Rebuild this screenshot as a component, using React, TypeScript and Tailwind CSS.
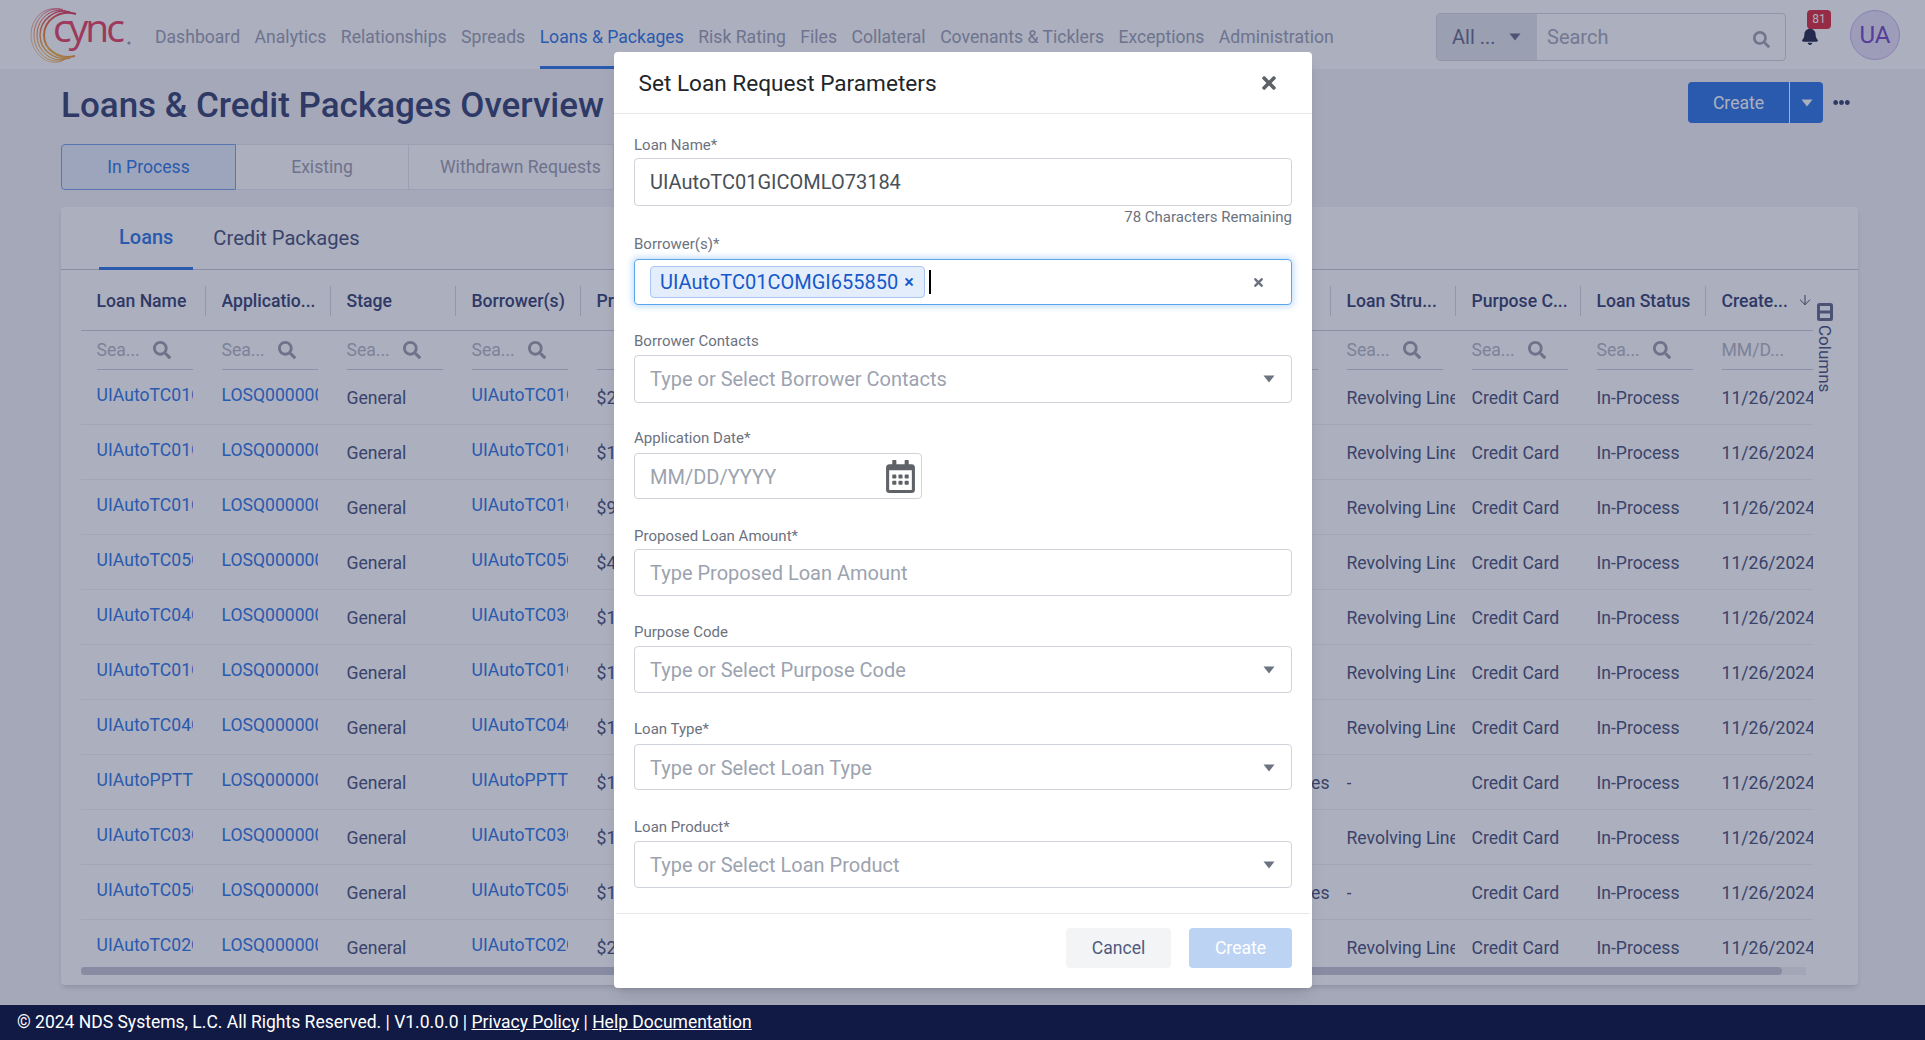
/**
 * Loans & Credit Packages overview with the "Set Loan Request Parameters" modal open
 */

import { ArrowDown } from 'lucide-react';
import { FaBell, FaEllipsisH, FaRegCalendarAlt, FaSearch, FaTimes } from 'react-icons/fa';

// ===========================================
// DATA
// ===========================================

const NAV_ITEMS = [
  'Dashboard',
  'Analytics',
  'Relationships',
  'Spreads',
  'Loans & Packages',
  'Risk Rating',
  'Files',
  'Collateral',
  'Covenants & Ticklers',
  'Exceptions',
  'Administration',
];

const COLUMNS = [
  'Loan Name',
  'Applicatio...',
  'Stage',
  'Borrower(s)',
  'Proposed...',
  'Loan Am...',
  'Loan Type',
  'Loan Pro...',
  'Loan Off...',
  'Loan Class',
  'Loan Stru...',
  'Purpose C...',
  'Loan Status',
  'Create...',
];

const LOAN_PREFIXES = ['TC01', 'TC01', 'TC01', 'TC05', 'TC04', 'TC01', 'TC04', 'PPTT', 'TC03', 'TC05', 'TC02'];
const BORROWER_PREFIXES = ['TC01', 'TC01', 'TC01', 'TC05', 'TC03', 'TC01', 'TC04', 'PPTT', 'TC03', 'TC05', 'TC02'];
const AMOUNTS = ['$2', '$1', '$9', '$4', '$1', '$1', '$1', '$1', '$1', '$1', '$2'];

// ===========================================
// SMALL PARTS
// ===========================================

function Caret({ className }: { className: string }) {
  return (
    <svg viewBox="0 0 12 8" className={className} fill="currentColor">
      <path d="M0.5 0.5h11L6 7.5z" />
    </svg>
  );
}

function Logo() {
  return (
    <div className="relative w-[104px] h-[60px] shrink-0">
      <svg viewBox="0 0 104 60" className="w-full h-full">
        <defs>
          <linearGradient id="swirl" x1="0.7" y1="0.05" x2="0.3" y2="1">
            <stop offset="0" stopColor="#e0465f" />
            <stop offset="0.55" stopColor="#ef7d3f" />
            <stop offset="1" stopColor="#f3c04a" />
          </linearGradient>
        </defs>
        <g fill="none" stroke="url(#swirl)">
          <path d="M31 4.5C15 0 1 13 1 30s15 32 31 26" strokeWidth="0.6" />
          <path d="M33 4.5C18 1 4 13 4 30s14 30 30 25" strokeWidth="0.8" />
          <path d="M36 6C21 2 7 14 7 30s14 28 29 24" strokeWidth="1" />
          <path d="M40 7C25 3 10 15 10 30s14 26 30 23" strokeWidth="1.4" />
          <path d="M46 9C30 4 14 15 14 30s15 25 31 21" strokeWidth="2" />
        </g>
        <text
          x="23"
          y="37"
          fill="#e94a66"
          fontFamily="'Open Sans', sans-serif"
          fontSize="39"
          letterSpacing="-3"
        >
          cync
        </text>
        <circle cx="99" cy="38" r="1.6" fill="#9aa0b2" />
      </svg>
    </div>
  );
}

// ===========================================
// HEADER
// ===========================================

function TopBar() {
  return (
    <header className="h-[69px] shrink-0 bg-white shadow-md flex items-center pl-[30px] pr-[25px]">
      <Logo />
      <nav className="flex items-stretch h-full ml-[21px] gap-[14.5px]">
        {NAV_ITEMS.map((item) => {
          const active = item === 'Loans & Packages';
          return (
            <span
              key={item}
              className={
                active
                  ? 'flex items-center pt-[8px] border-b-[3px] border-[#377de6] text-[#377de6] text-[17.6px] whitespace-nowrap'
                  : 'flex items-center pt-[8px] border-b-[3px] border-transparent text-[#a0a5b6] text-[17.6px] whitespace-nowrap'
              }
            >
              {item}
            </span>
          );
        })}
      </nav>
      <div className="ml-auto flex items-center">
        <div className="mt-[4px] flex w-[350px] h-[48px] rounded border border-[#d5d7e0] overflow-hidden">
          <div className="w-[100px] bg-[#e4e6ec] flex items-center pl-[15px] text-[#6d7390] text-[20px]">
            <span>All ...</span>
            <Caret className="w-[12px] h-[8px] ml-[13px] text-[#6d7390]" />
          </div>
          <div className="flex-1 flex items-center pl-[10px] pr-[15px] text-[20px] text-[#a9adbd]">
            <span>Search</span>
            <FaSearch className="ml-auto mt-[6px] w-[17px] h-[17px] text-[#a4a8b5]" />
          </div>
        </div>
        <div className="relative ml-[14px] w-[20px] h-[30px] flex items-center justify-center">
          <FaBell className="w-[16px] h-[18px] mt-[2px] text-[#2d3454]" />
          <span className="absolute -top-[10px] left-[7px] w-[24px] h-[19px] rounded-sm bg-[#dc3545] text-white text-[12px] flex items-center justify-center">
            81
          </span>
        </div>
        <div className="ml-[30px] w-[50px] h-[50px] rounded-full bg-[#e9e3f8] border border-[#cbb8ef] text-[#7a52c7] text-[24px] flex items-center justify-center">
          UA
        </div>
      </div>
    </header>
  );
}

// ===========================================
// TABLE
// ===========================================

function HeaderRow() {
  return (
    <div className="flex h-[61px] shrink-0 border-b border-[#cdd0da]">
      {COLUMNS.map((col, i) => {
        const last = i === COLUMNS.length - 1;
        return (
          <div key={col} className={last ? 'w-[107px] shrink-0 flex items-center pl-[15.5px] pt-[3px]' : 'w-[125px] shrink-0 flex items-center pl-[15.5px] pt-[3px]'}>
            <span className="flex-1 text-[17.6px] font-medium text-[#3e4b78] whitespace-nowrap overflow-hidden">{col}</span>
            {last ? (
              <ArrowDown className="w-[16px] h-[16px] mb-[4px] text-[#4b5563]" strokeWidth={1.5} />
            ) : (
              <span className="w-px h-[30px] -mt-[2px] bg-[#d9dbe3]" />
            )}
          </div>
        );
      })}
    </div>
  );
}

function FilterRow() {
  return (
    <div className="flex h-[39px] shrink-0">
      {COLUMNS.map((col, i) => {
        const last = i === COLUMNS.length - 1;
        // the amount column's filter has no text box of its own
        const blank = i === 4;
        return (
          <div key={col} className="w-[125px] shrink-0 pl-[15.5px]">
            <div className="flex items-center h-full border-b border-[#cdd0da] w-[96px] text-[17.6px] text-[#b7bac6]">
              {!blank && <span>{last ? 'MM/D...' : 'Sea...'}</span>}
              {!last && !blank && <FaSearch className="ml-[13px] w-[18px] h-[18px] text-[#a0a3ae]" />}
            </div>
          </div>
        );
      })}
    </div>
  );
}

function LinkCell({ text }: { text: string }) {
  return (
    <div className="w-[125px] shrink-0 pl-[15.5px] pt-[12px]">
      <div className="w-[96px] overflow-hidden whitespace-nowrap text-[17.6px] leading-[27px] text-[#377de6]">{text}</div>
    </div>
  );
}

function TextCell({ text }: { text: string }) {
  return (
    <div className="w-[125px] shrink-0 pl-[15.5px] pt-[15px]">
      <div className="w-[108px] overflow-hidden whitespace-nowrap text-[17.6px] leading-[27px] text-[#505a80]">{text}</div>
    </div>
  );
}

function LoanRow({ index }: { index: number }) {
  const loan = LOAN_PREFIXES[index];
  const borrower = BORROWER_PREFIXES[index];
  const noStructure = index === 7 || index === 9;
  const loanName = loan === 'PPTT' ? 'UIAutoPPTT' : `UIAuto${loan}COMGI655850`;
  const borrowerName = borrower === 'PPTT' ? 'UIAutoPPTT' : `UIAuto${borrower}COMGI655850`;

  return (
    <div className="flex h-[55px] shrink-0 border-b border-[#f0f1f5]">
      <LinkCell text={loanName} />
      <LinkCell text="LOSQ000000123" />
      <TextCell text="General" />
      <LinkCell text={borrowerName} />
      <TextCell text={`${AMOUNTS[index]},000,000`} />
      <TextCell text="$0.00" />
      <TextCell text="Commercial" />
      <TextCell text="Credit Line" />
      <TextCell text="Admin" />
      <div className="w-[125px] shrink-0 pl-[15.5px] pt-[15px]">
        <div className={noStructure ? 'w-[108px] text-right whitespace-nowrap text-[17.6px] leading-[27px] text-[#505a80]' : 'w-[108px] whitespace-nowrap text-[17.6px] leading-[27px] text-[#505a80]'}>
          {noStructure ? 'Auto Leases' : 'Lines'}
        </div>
      </div>
      <TextCell text={noStructure ? '-' : 'Revolving Line of Credit'} />
      <TextCell text="Credit Card" />
      <TextCell text="In-Process" />
      <TextCell text="11/26/2024" />
    </div>
  );
}

function ColumnsTab() {
  return (
    <div className="absolute left-[1754px] top-[96px] w-[20px] flex flex-col items-center text-[#505a80]">
      <svg viewBox="0 0 16 18" className="w-[16px] h-[18px]" fill="none" stroke="#6b7190" strokeWidth="3">
        <rect x="1.5" y="1.5" width="13" height="15" rx="1" />
        <path d="M1.5 9h13" />
      </svg>
      <span className="mt-[4px] text-[17px] leading-[20px] [writing-mode:vertical-rl]">Columns</span>
    </div>
  );
}

function LoansCard() {
  return (
    <section className="relative flex-1 min-h-0 mt-[17px] bg-white rounded shadow-md flex flex-col">
      <div className="h-[63px] shrink-0 flex pl-[38px] border-b border-[#c9ccd6]">
        <div className="px-5 flex items-center border-b-[3px] -mb-px border-[#377de6] text-[20px] font-medium text-[#377de6]">
          Loans
        </div>
        <div className="px-5 flex items-center text-[20.2px] text-[#505a80]">Credit Packages</div>
      </div>
      <div className="flex-1 min-h-0 ml-5 w-[1732px] overflow-hidden flex flex-col">
        <HeaderRow />
        <FilterRow />
        {LOAN_PREFIXES.map((_, i) => (
          <LoanRow key={i} index={i} />
        ))}
      </div>
      <div className="ml-5 w-[1725px] h-[8px] mb-[10px] shrink-0 bg-[#f1f2f5]">
        <div className="w-[1701px] h-full rounded bg-[#c8c9d5]" />
      </div>
      <ColumnsTab />
    </section>
  );
}

// ===========================================
// PAGE BEHIND THE MODAL
// ===========================================

function PageContent() {
  return (
    <main className="flex-1 min-h-0 flex flex-col pl-[61px] pr-[67px] pb-[20px] bg-[#f4f5f8]">
      <div className="mt-[13px] h-[41px] flex items-center">
        <h1 className="pt-[7px] text-[35px] font-medium text-[#3e4b78] whitespace-nowrap">Loans &amp; Credit Packages Overview</h1>
        <div className="ml-auto mr-[33px] flex items-center">
          <div className="flex h-[41px] rounded bg-[#377de6] text-white">
            <span className="w-[102px] pt-[2px] flex items-center justify-center text-[17.6px] border-r border-white">Create</span>
            <span className="w-[33px] flex items-center justify-center">
              <Caret className="w-[12px] h-[8px]" />
            </span>
          </div>
          <FaEllipsisH className="ml-[10px] w-[17px] h-[17px] mr-[-25px] text-[#3e4b78]" />
        </div>
      </div>
      <div className="mt-[21px] h-[46px] flex text-[17.6px] text-[#9fa3b3]">
        <div className="w-[175px] flex items-center justify-center rounded-l border border-[#7fa9ec] bg-[#e8f0fc] text-[#377de6]">
          In Process
        </div>
        <div className="w-[173px] flex items-center justify-center border-y border-r border-[#e6e8ee] bg-white">Existing</div>
        <div className="w-[205px] pl-[31px] flex items-center border-y border-r border-[#e6e8ee] bg-white whitespace-nowrap">
          Withdrawn Requests
        </div>
      </div>
      <LoansCard />
    </main>
  );
}

// ===========================================
// MODAL
// ===========================================

interface FieldProps {
  label: string;
  gap: string;
  inputClass: string;
  placeholder: string;
  caret?: boolean;
}

/** Label with an empty text box, with or without the dropdown caret */
function Field({ label, gap, inputClass, placeholder, caret }: FieldProps) {
  return (
    <div className={gap}>
      <label className="block h-[20px] leading-[20px] text-[15px] text-[#6b7280]">{label}</label>
      <div className={`${inputClass} rounded border border-[#ced4da] flex items-center pl-[15px] pr-[16px] text-[20px] text-[#9ca3af]`}>
        <span>{placeholder}</span>
        {caret && <Caret className="ml-auto w-[12px] h-[8px] text-[#6b7280]" />}
      </div>
    </div>
  );
}

function LoanModal() {
  return (
    <div className="absolute z-20 left-[614px] top-[52px] w-[698px] h-[936px] bg-white rounded shadow-lg flex flex-col">
      <div className="h-[62px] shrink-0 border-b border-[#e5e7eb] flex items-center pl-[24.5px] pr-[34px]">
        <h2 className="pt-[2px] text-[22.6px] text-[#212529]">Set Loan Request Parameters</h2>
        <FaTimes className="ml-auto w-[18px] h-[20px] text-[#5f6368]" />
      </div>

      <div className="flex-1 px-[20px] pt-[21px]">
        <label className="block h-[20px] leading-[20px] text-[15px] text-[#6b7280]">Loan Name*</label>
        <div className="mt-[3px] h-[48px] rounded border border-[#ced4da] flex items-center pl-[15px] text-[20px] text-[#495057]">
          UIAutoTC01GICOMLO73184
        </div>
        <div className="h-[22px] text-right text-[15px] leading-[22px] text-[#6b7280]">78 Characters Remaining</div>

        <label className="block mt-[6px] h-[20px] leading-[20px] text-[15px] text-[#6b7280]">Borrower(s)*</label>
        <div className="mt-[5px] h-[46px] rounded border border-[#5aa5ee] shadow-[0_0_6px_2px_rgba(90,165,238,0.35)] flex items-center pl-[15px] pr-[26px]">
          <span className="h-[32px] w-[275px] rounded-sm border border-[#a9c6f2] bg-[#e4edfb] flex items-center pl-[9px] text-[20px] text-[#1559c9]">
            UIAutoTC01COMGI655850
            <span className="ml-[6px] -mt-[2px] text-[18px] font-medium">×</span>
          </span>
          <span className="ml-[4px] w-[2px] h-[24px] bg-black" />
          <FaTimes className="ml-auto w-[13px] h-[13px] text-[#6b7280]" />
        </div>

        <Field label="Borrower Contacts" gap="mt-[26px]" inputClass="mt-[4px] h-[48px]" placeholder="Type or Select Borrower Contacts" caret />

        <div className="mt-[25px]">
          <label className="block h-[20px] leading-[20px] text-[15px] text-[#6b7280]">Application Date*</label>
          <div className="mt-[5px] w-[288px] h-[46px] rounded border border-[#ced4da] flex items-center pl-[15px] pr-[6px] text-[20px] text-[#9ca3af]">
            <span className="pt-[2px]">MM/DD/YYYY</span>
            <FaRegCalendarAlt className="ml-auto w-[29px] h-[33px] text-[#5f6368]" />
          </div>
        </div>

        <Field label="Proposed Loan Amount*" gap="mt-[27px]" inputClass="mt-[3px] h-[47px]" placeholder="Type Proposed Loan Amount" />
        <Field label="Purpose Code" gap="mt-[26px]" inputClass="mt-[4px] h-[47px]" placeholder="Type or Select Purpose Code" caret />
        <Field label="Loan Type*" gap="mt-[26px]" inputClass="mt-[5px] h-[46px] pt-[2px]" placeholder="Type or Select Loan Type" caret />
        <Field label="Loan Product*" gap="mt-[27px]" inputClass="mt-[4px] h-[47px]" placeholder="Type or Select Loan Product" caret />
      </div>

      <div className="mx-[2px] h-[75px] shrink-0 border-t border-[#e5e7eb] flex items-start justify-end gap-[18px] pt-[14px] pr-[18px]">
        <button className="w-[105px] h-[40px] rounded bg-[#f3f4f6] text-[17.6px] text-[#505a80]">Cancel</button>
        <button className="w-[103px] h-[40px] rounded bg-[#bcd3f3] text-[17.6px] text-white">Create</button>
      </div>
    </div>
  );
}

// ===========================================
// APP
// ===========================================

export default function App() {
  return (
    <div className="relative w-[1925px] h-[1040px] overflow-hidden flex flex-col font-['Roboto',sans-serif]">
      <TopBar />
      <PageContent />
      <div className="absolute z-10 inset-0 bg-[#101a45]/35" />
      <LoanModal />
      <footer className="relative z-20 h-[35px] shrink-0 bg-[#101a45] flex items-center pl-[17px] pb-[1px] text-[17.5px] text-white">
        © 2024 NDS Systems, L.C. All Rights Reserved. | V1.0.0.0 |&nbsp;
        <span className="underline">Privacy Policy</span>&nbsp;|&nbsp;
        <span className="underline">Help Documentation</span>
      </footer>
    </div>
  );
}
